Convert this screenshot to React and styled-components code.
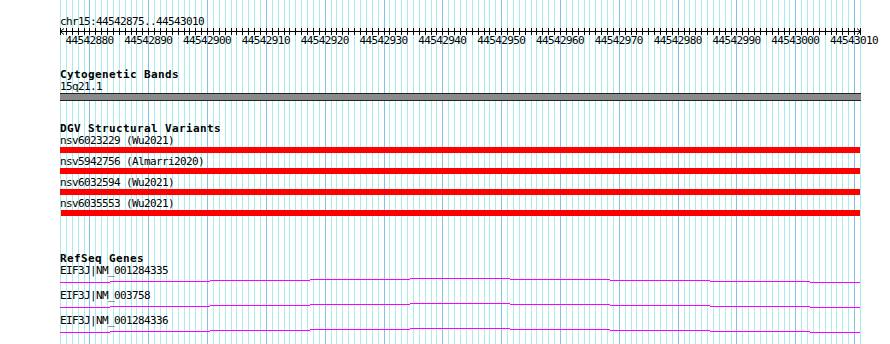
import React from 'react';
import styled, { createGlobalStyle } from 'styled-components';

const START = 44542875;
const END = 44543010;
const LEFT = 60;
const TRACK_W = 800;
const BASES = END - START + 1;
const PX = TRACK_W / BASES;

const GlobalStyle = createGlobalStyle`
  html, body { margin: 0; padding: 0; background: #fff; }
  body { font-family: "DejaVu Sans Mono", "Liberation Mono", monospace; color: #000; }
`;

const Page = styled.div`
  position: relative;
  width: 890px;
  height: 344px;
  overflow: hidden;
  background: #fff;
`;

const GridLayer = styled.svg`
  position: absolute;
  left: 0;
  top: 0;
  width: 890px;
  height: 344px;
  z-index: 0;
`;

const Tracks = styled.div`
  position: relative;
  z-index: 1;
  display: flex;
  flex-direction: column;
  padding: 16px 0 0 ${LEFT}px;
  width: ${TRACK_W}px;
`;

const TextLine = styled.div`
  font-family: "DejaVu Sans Mono", "Liberation Mono", monospace;
  font-size: 11px;
  line-height: 12px;
  height: 12px;
  letter-spacing: -0.62px;
  white-space: nowrap;
`;

const TrackTitle = styled(TextLine)`
  font-weight: bold;
  letter-spacing: 0.38px;
`;

const Track = styled.section`
  display: flex;
  flex-direction: column;
  margin-top: ${p => p.$gap}px;
`;

const BandBar = styled.div`
  height: 6px;
  width: ${TRACK_W + 1}px;
  background: #8a8a8a;
  border-top: 1px solid #222;
  border-bottom: 1px solid #222;
`;

const VariantRow = styled.div`
  display: flex;
  flex-direction: column;
  margin-top: ${p => p.$gap}px;
`;

const VariantBar = styled.div`
  height: 6px;
  margin-left: ${p => p.$shift || 0}px;
  width: ${p => TRACK_W - (p.$shift || 0)}px;
  background: #ff0000;
`;

const GeneRow = styled.div`
  display: flex;
  flex-direction: column;
`;

const Ruler = styled.svg`
  display: block;
  overflow: visible;
`;

const variants = [
  { id: 'nsv6023229 (Wu2021)' },
  { id: 'nsv5942756 (Almarri2020)' },
  { id: 'nsv6032594 (Wu2021)' },
  { id: 'nsv6035553 (Wu2021)', shift: 1 },
];

const genes = ['EIF3J|NM_001284335', 'EIF3J|NM_003758', 'EIF3J|NM_001284336'];

// step levels of the transcript line, 100px segments (first/last 50px)
const geneSteps = [
  [0, 50, 4], [50, 150, 3], [150, 250, 2], [250, 350, 1], [350, 450, 0],
  [450, 550, 1], [550, 650, 2], [650, 750, 3], [750, 800, 4],
];

const Grid = () => {
  const lines = [];
  for (let i = 0; i <= BASES; i++) {
    const x = Math.round(LEFT + i * PX);
    const major = i % 10 === 5;
    lines.push(
      <rect key={i} x={x} y={0} width={1} height={344} fill={major ? '#84c2ea' : '#a9ecec'} />
    );
  }
  return (
    <GridLayer viewBox="0 0 890 344" shapeRendering="crispEdges">
      {lines}
    </GridLayer>
  );
};

const Axis = () => {
  const ticks = [];
  const labels = [];
  for (let i = 0; i <= BASES; i++) {
    const x = Math.round(i * PX) + 0.5;
    ticks.push(<line key={i} x1={x} x2={x} y1={0} y2={7} stroke="#000" strokeWidth="1" />);
    if (i % 10 === 5) {
      labels.push(
        <text
          key={i}
          x={i * PX}
          y={16}
          textAnchor="middle"
          fontFamily='"DejaVu Sans Mono", "Liberation Mono", monospace'
          fontSize="11"
          letterSpacing="-0.62"
          fill="#000"
        >
          {START + i}
        </text>
      );
    }
  }
  return (
    <Ruler width={830} height={19} viewBox="0 0 830 19">
      <g shapeRendering="crispEdges">
        <line x1={0} x2={801} y1={3.5} y2={3.5} stroke="#000" />
        {ticks}
      </g>
      <polyline points="4,0.5 0.5,3.5 4,6.5" fill="none" stroke="#000" />
      <polyline points="797,0.5 800.5,3.5 797,6.5" fill="none" stroke="#000" />
      {labels}
    </Ruler>
  );
};

const GeneLine = () => (
  <svg width={TRACK_W} height={13} viewBox={`0 0 ${TRACK_W} 13`} shapeRendering="crispEdges" style={{ display: 'block' }}>
    {geneSteps.map(([a, b, lvl]) => (
      <rect key={a} x={a} y={1 + lvl} width={b - a} height={1} fill="#ff00ff" />
    ))}
  </svg>
);

export default function App() {
  return (
    <>
      <GlobalStyle />
      <Page>
        <Grid />
        <Tracks>
          <TextLine>chr15:44542875..44543010</TextLine>
          <Axis />

          <Track $gap={22}>
            <TrackTitle>Cytogenetic Bands</TrackTitle>
            <TextLine>15q21.1</TextLine>
            <BandBar />
          </Track>

          <Track $gap={22}>
            <TrackTitle>DGV Structural Variants</TrackTitle>
            {variants.map((v, i) => (
              <VariantRow key={v.id} $gap={i === 0 ? 0 : 3}>
                <TextLine>{v.id}</TextLine>
                <VariantBar $shift={v.shift} />
              </VariantRow>
            ))}
          </Track>

          <Track $gap={37}>
            <TrackTitle>RefSeq Genes</TrackTitle>
            {genes.map(g => (
              <GeneRow key={g}>
                <TextLine>{g}</TextLine>
                <GeneLine />
              </GeneRow>
            ))}
          </Track>
        </Tracks>
      </Page>
    </>
  );
}
